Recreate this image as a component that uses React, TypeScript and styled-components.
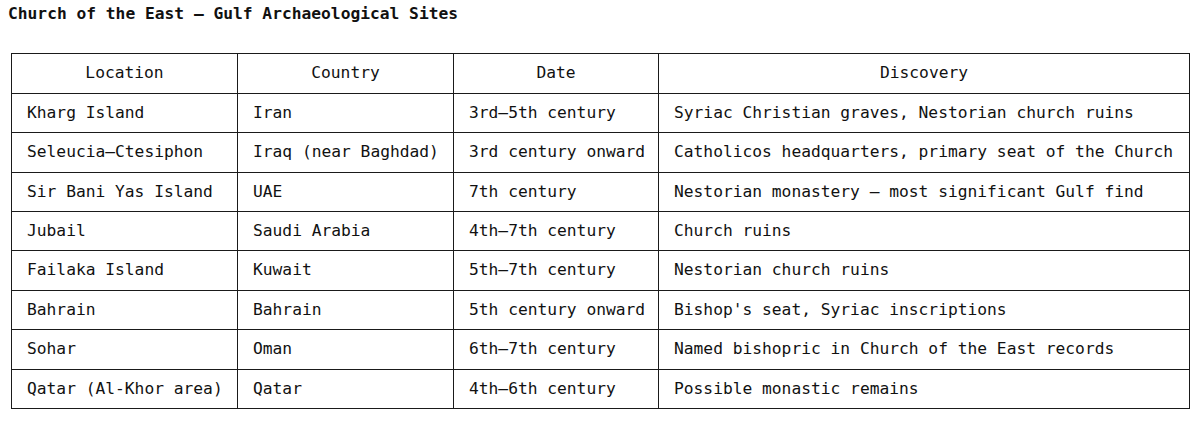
import { createGlobalStyle } from 'styled-components'
import styled from 'styled-components'

// ============================================================================
// Data
// ============================================================================

interface Site {
  location: string
  country: string
  date: string
  discovery: string
}

const sites: Site[] = [
  {
    location: 'Kharg Island',
    country: 'Iran',
    date: '3rd–5th century',
    discovery: 'Syriac Christian graves, Nestorian church ruins',
  },
  {
    location: 'Seleucia–Ctesiphon',
    country: 'Iraq (near Baghdad)',
    date: '3rd century onward',
    discovery: 'Catholicos headquarters, primary seat of the Church',
  },
  {
    location: 'Sir Bani Yas Island',
    country: 'UAE',
    date: '7th century',
    discovery: 'Nestorian monastery — most significant Gulf find',
  },
  {
    location: 'Jubail',
    country: 'Saudi Arabia',
    date: '4th–7th century',
    discovery: 'Church ruins',
  },
  {
    location: 'Failaka Island',
    country: 'Kuwait',
    date: '5th–7th century',
    discovery: 'Nestorian church ruins',
  },
  {
    location: 'Bahrain',
    country: 'Bahrain',
    date: '5th century onward',
    discovery: "Bishop's seat, Syriac inscriptions",
  },
  {
    location: 'Sohar',
    country: 'Oman',
    date: '6th–7th century',
    discovery: 'Named bishopric in Church of the East records',
  },
  {
    location: 'Qatar (Al-Khor area)',
    country: 'Qatar',
    date: '4th–6th century',
    discovery: 'Possible monastic remains',
  },
]

const columns = [
  { label: 'Location', width: 226 },
  { label: 'Country', width: 216 },
  { label: 'Date', width: 205 },
  { label: 'Discovery', width: 531 },
]

// ============================================================================
// Styled Components
// ============================================================================

const GlobalStyle = createGlobalStyle`
  html, body {
    margin: 0;
    padding: 0;
    background: #ffffff;
  }
  body {
    font-family: "DejaVu Sans Mono", "Liberation Mono", monospace;
    color: #111111;
  }
`

const Page = styled.div`
  padding: 3px 8px 0 8px;
`

const Title = styled.h1`
  margin: 0;
  font-size: 16.25px;
  line-height: 22.4px;
  font-weight: 700;
  color: #111;
`

const TableWrap = styled.div`
  padding: 28px 3px 0 3px;
`

const Table = styled.table`
  width: 1178px;
  table-layout: fixed;
  border-collapse: collapse;
  border: 1px solid #1a1a1a;
  font-size: 16.25px;
  line-height: 22.4px;
`

const Col = styled.col<{ $width: number }>`
  width: ${(p) => p.$width}px;
`

const HeadCell = styled.th`
  border: 1px solid #1a1a1a;
  padding: 8px 15px;
  font-weight: 400;
  text-align: center;
  white-space: nowrap;
`

const Cell = styled.td`
  border: 1px solid #1a1a1a;
  padding: 8px 15px;
  text-align: left;
  white-space: nowrap;
`

// ============================================================================
// Component
// ============================================================================

export default function App() {
  return (
    <>
      <GlobalStyle />
      <Page>
        <Title>Church of the East — Gulf Archaeological Sites</Title>
        <TableWrap>
          <Table>
            <colgroup>
              {columns.map((c) => (
                <Col key={c.label} $width={c.width} />
              ))}
            </colgroup>
            <thead>
              <tr>
                {columns.map((c) => (
                  <HeadCell key={c.label}>{c.label}</HeadCell>
                ))}
              </tr>
            </thead>
            <tbody>
              {sites.map((s) => (
                <tr key={s.location}>
                  <Cell>{s.location}</Cell>
                  <Cell>{s.country}</Cell>
                  <Cell>{s.date}</Cell>
                  <Cell>{s.discovery}</Cell>
                </tr>
              ))}
            </tbody>
          </Table>
        </TableWrap>
      </Page>
    </>
  )
}
